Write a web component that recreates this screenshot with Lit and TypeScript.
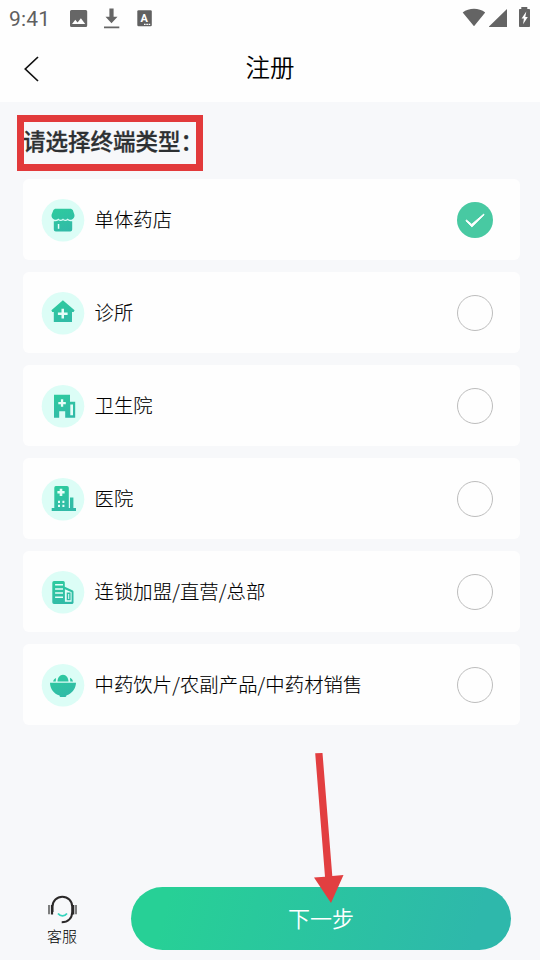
import { LitElement, html, css, svg } from "lit";
import { customElement, property, state } from "lit/decorators.js";
import { classMap } from "lit/directives/class-map.js";

const glyphs: Record<string, unknown> = {
  store: svg`
    <path class="g" d="M13 9.700h16l1.800 1.200 1.700 5.200c.2 2.300-1.200 4.200-3.100 4.600-1.500.3-2.800-.1-3.700-1.200-.9.900-1.600 1.200-2.400 1.200-1 0-1.700-.4-2.300-1.200-.7.800-1.400 1.200-2.400 1.200-.9 0-1.700-.4-2.300-1.200-.9 1.100-2.100 1.500-3.600 1.200-2-.4-3.400-2.300-3.200-4.600l1.900-5.200z"/>
    <path class="g" d="M11.800 22.200c2 .4 3.500 0 4.600-.9 1.500.9 3.200.9 4.700 0 1.500.9 3.100.9 4.600 0 1.300.9 2.800 1.300 4.500.9V30.500a2 2 0 0 1-2 2H13.800a2 2 0 0 1-2-2z"/>
    <path class="w" d="M15.800 25h1.500v4.800h-1.500z"/>`,
  clinic: svg`
    <path class="g" d="M20.900 8.300 32.600 18.200 31.600 19.900H30V30H11.800V19.900H10.200L9.400 18.200z"/>
    <path class="w" d="M19.500 16.800h2.500v3.700h3.600V23H22v3.600h-2.500V23h-3.600v-2.500h3.600z"/>`,
  health: svg`
    <path class="g" d="M12 9.800h16v7h5.200v15.900H28V32.700H23.200V26.300H17.200V32.700H12z"/>
    <path class="w" d="M18.900 14.300h2.300v2.600h2.600v2.300h-2.600v2.600h-2.300v-2.600h-2.600v-2.300h2.600zM28.300 19.500h2.700V30.200h-2.700z"/>`,
  hospital: svg`
    <path class="g" d="M14.500 8h10.500a1.800 1.800 0 0 1 1.800 1.800V30h1.200V19.600h3.400V30H34v2.900H9.700V30h2.600V9.800A1.800 1.800 0 0 1 14.500 8z"/>
    <path class="w" d="M17.700 10.800h2.600v2.300h2.300v2.500h-2.300v2.300h-2.600v-2.300h-2.300v-2.500h2.300zM16 22.800h2v2.300h-2zM20.400 22.800h2v2.300h-2zM16 26.800h2v2.300h-2zM20.400 26.800h2v2.300h-2z"/>`,
  chain: svg`
    <path class="g" d="M12 10h9.200a1.600 1.600 0 0 1 1.600 1.600V15.800l8.100 3.800.6 1V32l-1 1H12a1.700 1.700 0 0 1-1.700-1.700V11.700A1.700 1.700 0 0 1 12 10z"/>
    <path class="w" d="M13.100 13h7.900v1.500h-7.900zM13.100 17.200h7.900v1.500h-7.900zM13.100 21.300h7.900v1.500h-7.900zM13.100 25.400h7.900v1.500h-7.900zM22.900 18.200l6.700 3V30.800h-6.700z"/>
    <path class="g" d="M24.700 21.500h3.900v7.800h-3.900zM26.200 23v4.900h1V23z" fill-rule="evenodd"/>`,
  herbs: svg`
    <path class="g" d="M8 18.800h26c-.1 4.800-2.800 9.300-7.300 11.700-.7.400-1.600.7-2.400.9v.8l-.8.700h-5.200l-.7-.7v-.8C11.700 30 8.100 24.800 8 18.800zM15.500 17.600c0-4 2.300-6.900 5.500-6.900s5.500 2.900 5.500 6.900zM11.100 17.600c.3-1.700 1.200-2.900 2.900-3.700l-.2 3.700zM28 13.700c1.800.8 2.700 2.200 3 3.900h-2.700z"/>`,
};

@customElement("terminal-option")
class TerminalOption extends LitElement {
  @property() label = "";
  @property() icon = "";
  @property({ type: Boolean }) selected = false;

  static styles = css`
    :host { display: block; }
    .card {
      box-sizing: border-box;
      height: 81px;
      padding: 1px 27px 0 19.500px;
      display: flex;
      align-items: center;
      background: #fefefe;
      border-radius: 6px;
      cursor: pointer;
    }
    .icon { width: 42px; height: 42px; flex: none; overflow: visible; }
    .halo { fill: #dcfdf6; }
    .g { fill: url(#tint); }
    .w { fill: #e6fdf8; }
    .label {
      flex: 1;
      margin-left: 10.500px;
      padding-bottom: 2px;
      font-size: 19.300px;
      letter-spacing: 0.14px;
      line-height: 28px;
      font-weight: 300;
      color: #000;
      -webkit-text-stroke: 0.12px #000;
      white-space: nowrap;
    }
    .radio {
      box-sizing: border-box;
      width: 36px;
      height: 36px;
      border: 1px solid #bdbdbd;
      border-radius: 50%;
    }
    .radio.on { border: 0; background: #48c9a2; }
    .tick { display: block; width: 36px; height: 36px; }
  `;

  render() {
    return html`<div class="card">
      <svg class="icon" viewBox="0 0 42 42">
        <defs>
          <linearGradient id="tint" gradientUnits="userSpaceOnUse" x1="15" y1="8" x2="25" y2="34">
            <stop offset="0" stop-color="#2ecb9e" /><stop offset="1" stop-color="#31b9a8" />
          </linearGradient>
        </defs>
        <circle class="halo" cx="21" cy="21.200" r="21.300" />
        ${glyphs[this.icon]}
      </svg>
      <span class="label">${this.label}</span>
      <span class=${classMap({ radio: true, on: this.selected })}>
        ${this.selected
          ? html`<svg class="tick" viewBox="0 0 36 36"><path d="M9.400 17.900 14.700 22.300 26.800 12 27 12.900 14.900 24.900 9 18.900z" fill="#fff" stroke="#fff" stroke-width=".9" stroke-linejoin="round" /></svg>`
          : ""}
      </span>
    </div>`;
  }
}

@customElement("app-root")
class AppRoot extends LitElement {
  @state() private picked = 0;

  private options = [
    { icon: "store", label: "单体药店" },
    { icon: "clinic", label: "诊所" },
    { icon: "health", label: "卫生院" },
    { icon: "hospital", label: "医院" },
    { icon: "chain", label: "连锁加盟/直营/总部" },
    { icon: "herbs", label: "中药饮片/农副产品/中药材销售" },
  ];

  static styles = css`
    :host {
      position: relative;
      display: flex;
      flex-direction: column;
      box-sizing: border-box;
      width: 540px;
      height: 960px;
      overflow: hidden;
      background: #f7f8fa;
      font-family: "Noto Sans CJK SC", "Noto Sans", sans-serif;
    }
    .top { height: 102px; flex: none; background: #fefefe; }
    .status { height: 36px; display: flex; align-items: center; }
    .time {
      width: 59px;
      padding: 1px 0 0 9px;
      font: 400 21px/24px Roboto, sans-serif;
      letter-spacing: 0.2px;
      color: #5f5f5f;
    }
    .left, .right { display: block; flex: none; }
    .right { margin-left: auto; }
    .nav {
      height: 66px;
      display: grid;
      grid-template-columns: 60px 1fr 60px;
      align-items: center;
    }
    .title {
      margin: 0;
      padding-bottom: 4px;
      text-align: center;
      font-size: 24.500px;
      line-height: 36px;
      font-weight: 350;
      color: #000;
    }
    .heading {
      position: relative;
      height: 56px;
      margin: 13px 0 0 17px;
      width: 186px;
      display: flex;
      align-items: center;
    }
    .heading h2 {
      margin: 0;
      padding: 0 0 6px 6px;
      font-size: 22.500px;
      line-height: 32px;
      font-weight: 500;
      color: #2d3032;
      -webkit-text-stroke: 0.3px #2d3032;
      white-space: nowrap;
    }
    .mark {
      position: absolute;
      inset: 0;
      box-sizing: border-box;
      border: 7px solid #e23a3b;
    }
    .list {
      display: flex;
      flex-direction: column;
      gap: 12px;
      margin: 8px 20px 0 22.500px;
    }
    .bottom {
      display: flex;
      margin-top: auto;
      padding: 0 29px 10px 0;
      height: 63px;
    }
    .service {
      width: 124px;
      margin-right: 7px;
      display: flex;
      flex-direction: column;
      align-items: center;
      font-size: 15px;
      line-height: 22px;
      font-weight: 300;
      color: #000;
    }
    .service svg { margin-top: 7px; }
    .next {
      flex: 1;
      border: 0;
      padding: 0 0 3px;
      border-radius: 32px;
      background: linear-gradient(105deg, #27d096 10%, #2eb8ab 90%);
      color: #fff;
      font: 350 22px/32px "Noto Sans CJK SC", sans-serif;
    }
    .arrow { position: absolute; left: 310px; top: 750px; pointer-events: none; }
  `;

  render() {
    return html`
      <header class="top">
        <div class="status">
          <span class="time">9:41</span>
          <svg class="left" width="100" height="36" viewBox="68 0 100 36">
            <path fill="#666" fill-rule="evenodd" d="M71.500 10h14.200a1.500 1.500 0 0 1 1.500 1.500v14a1.500 1.500 0 0 1-1.500 1.500H71.500a1.500 1.500 0 0 1-1.500-1.500v-14a1.500 1.500 0 0 1 1.500-1.500zM72 24h13.200l-4.300-5.800-3.300 4.200-2.300-2.700z" />
            <path fill="#666" d="M109.400 8.500h4.200v8.200h3.900l-6 6.600-6-6.600h3.900zM104 26.500h15.300v1.800H104z" />
            <rect x="137.300" y="10.200" width="14.500" height="16" rx="1.300" fill="#606060" />
            <text x="144.300" y="22" text-anchor="middle" font-family="Roboto" font-weight="700" font-size="11" fill="#fff">A</text>
            <path d="M144 24.300h6.500" stroke="#fff" stroke-width="1.200" stroke-dasharray="1.600 .7" />
          </svg>
          <svg class="right" width="80" height="36" viewBox="460 0 80 36">
            <path fill="#646464" d="M462.700 12.600C469 7.600 479 7.600 485.200 12.600L474 26.300zM489 27V26.500L507 9v18zM521.300 9v-2h6v2h1.900q.8 0 .8.800v16.400q0 .8-.8.800h-9.400q-.8 0-.8-.8V9.800q0-.8.800-.8z" />
            <path fill="#fff" d="M526.300 11.500 521.600 18.600h2.300l-.8 5.700 4.700-7.300h-2.500z" />
          </svg>
        </div>
        <div class="nav">
          <svg width="60" height="66" viewBox="0 36 60 66">
            <path d="M38 57 25.300 69 38 81" fill="none" stroke="#111" stroke-width="1.700" />
          </svg>
          <h1 class="title">注册</h1>
        </div>
      </header>
      <div class="heading"><h2>请选择终端类型：</h2><div class="mark"></div></div>
      <main class="list">
        ${this.options.map(
          (o, i) => html`<terminal-option
            .icon=${o.icon}
            .label=${o.label}
            .selected=${i === this.picked}
            @click=${() => (this.picked = i)}
          ></terminal-option>`
        )}
      </main>
      <footer class="bottom">
        <div class="service">
          <svg width="32" height="31" viewBox="46 894 32 31" fill="none">
            <path d="M52.500 912v-5.500a9.800 9.800 0 0 1 19.700 0v5.500c0 6-4 10.300-10.500 10.300" stroke="#2b2929" stroke-width="2" />
            <path d="M49 905v9.300M76 905v9.300" stroke="#555" stroke-width="1.500" />
            <path d="M52 905v9.500M73.200 905v9.500" stroke="#2b2929" stroke-width="2.200" />
            <path d="M58 913.500c2.500 3.200 6.500 3.200 9 0" stroke="#35d4bd" stroke-width="1.800" />
          </svg>
          <span>客服</span>
        </div>
        <button class="next">下一步</button>
      </footer>
      <svg class="arrow" width="40" height="158" viewBox="310 750 40 158">
        <path fill="#e23f40" d="M315.200 753.300 322.500 753 332.300 876 343.500 875 331 903 314 877.500 325 876.700z" />
      </svg>
    `;
  }
}
